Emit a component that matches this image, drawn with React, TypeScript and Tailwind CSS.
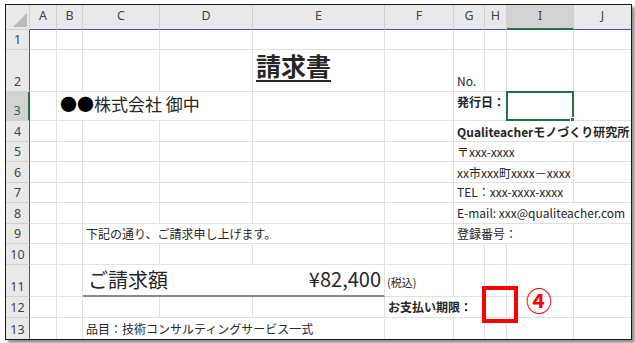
import React from "react";

const LETTERS = ["A", "B", "C", "D", "E", "F", "G", "H", "I", "J"];
const ROWS = [1, 2, 3, 4, 5, 6, 7, 8, 9, 10, 11, 12, 13];

const HIDE_RIGHT: Record<number, number[]> = {
  3: [2, 3, 7],
  4: [7, 8, 9],
  5: [7, 8],
  6: [7, 8],
  7: [7, 8],
  8: [7, 8, 9],
  9: [3, 4, 7, 8],
  12: [6],
  13: [3, 4],
};

const txt = "whitespace-nowrap leading-none text-[#262626]";

function CellContent({ r, c }: { r: number; c: number }) {
  const k = `${r}-${c}`;
  switch (k) {
    case "2-5":
      return (
        <span className={`${txt} pl-[3px] pb-[13px] text-[25px] font-bold text-[#111] underline decoration-2 underline-offset-[4px]`}>
          請求書
        </span>
      );
    case "2-7":
      return <span className={`${txt} pl-[3px] pb-[4px] text-[12px]`}>No.</span>;
    case "3-2":
      return (
        <span className={`${txt} pl-[3px] pb-[8px] text-[17px]`}>
          <span className="text-black">●●</span>株式会社 御中
        </span>
      );
    case "3-7":
      return <span className={`${txt} pl-[3px] pb-[12px] text-[12px] font-bold text-[#111]`}>発行日：</span>;
    case "4-7":
      return <span className={`${txt} pl-[3px] pb-[3px] text-[12px] font-bold text-[#111]`}>Qualiteacherモノづくり研究所</span>;
    case "5-7":
      return <span className={`${txt} pl-[3px] pb-[3px] text-[12px]`}>〒xxx-xxxx</span>;
    case "6-7":
      return <span className={`${txt} pl-[3px] pb-[3px] text-[12px]`}>xx市xxx町xxxx－xxxx</span>;
    case "7-7":
      return <span className={`${txt} pl-[3px] pb-[4px] text-[12px]`}>TEL：xxx-xxxx-xxxx</span>;
    case "8-7":
      return <span className={`${txt} pl-[3px] pb-[4px] text-[12px]`}>E-mail: xxx@qualiteacher.com</span>;
    case "9-3":
      return <span className={`${txt} pl-[3px] pb-[3px] text-[12px]`}>下記の通り、ご請求申し上げます。</span>;
    case "9-7":
      return <span className={`${txt} pl-[3px] pb-[3px] text-[12px] text-[#444]`}>登録番号：</span>;
    case "11-6":
      return <span className={`${txt} pl-[2px] pb-[8px] text-[11px]`}>(税込)</span>;
    case "12-6":
      return <span className={`${txt} pl-[3px] pb-[4px] text-[12px] font-bold text-[#111]`}>お支払い期限：</span>;
    case "13-3":
      return <span className={`${txt} pl-[3px] pb-[4px] text-[12px]`}>品目：技術コンサルティングサービス一式</span>;
    default:
      return null;
  }
}

function DataCell({ r, c }: { r: number; c: number }) {
  const hide = (HIDE_RIGHT[r] || []).includes(c) || c === 10;
  const last = r === 13;
  const cls = [
    "relative flex items-end overflow-visible border-[#e1e1e1]",
    hide ? "" : "border-r",
    last ? "" : "border-b",
  ].join(" ");
  return (
    <div className={cls}>
      <CellContent r={r} c={c} />
      {r === 3 && c === 9 && (
        <div className="pointer-events-none absolute -left-[1px] -top-[1px] -right-[1px] -bottom-[1px] z-10 border-2 border-[#217346]">
          <div className="absolute -bottom-[3px] -right-[3px] h-[5px] w-[5px] border border-white bg-[#217346]" />
        </div>
      )}
      {r === 12 && c === 8 && (
        <div className="pointer-events-none absolute left-[-3px] top-[-11px] z-20 h-[37px] w-[36px] border-[4px] border-[#ff0000]" />
      )}
      {r === 12 && c === 9 && (
        <span className="pointer-events-none absolute left-[19px] top-[-10px] z-20 whitespace-nowrap text-[26px] font-bold leading-none text-[#ff0000]">
          ④
        </span>
      )}
    </div>
  );
}

export default function App() {
  return (
    <div className="h-[343px] w-[635px] bg-white pl-[5px] pt-[4px] font-['Noto_Sans_CJK_JP',sans-serif]">
      <div className="h-[336px] w-[627px] overflow-hidden border border-[#1a1a1a] bg-white shadow-[3px_3px_3px_rgba(0,0,0,0.45)]">
        <div className="grid grid-cols-[24px_27px_26px_77px_93px_132px_69px_31px_22px_67px_57px] grid-rows-[25px_20px_42px_29px_21px_20px_21px_20px_21px_20px_21px_32px_21px_21px]">
          {/* corner */}
          <div className="relative border-b border-r border-[#cfcfcf] bg-[#e9e9e9]">
            <svg className="absolute left-0 top-0" width="23" height="24" viewBox="0 0 23 24">
              <polygon points="21,8 21,22 7,22" fill="#b9b9b9" />
            </svg>
          </div>
          {LETTERS.map((l, i) => {
            const isI = l === "I";
            const isJ = l === "J";
            const cls = [
              "flex items-center justify-center font-['Noto_Sans',sans-serif] text-[12.5px] leading-none text-[#444]",
              isI ? "bg-[#d3d3d3] border-b-2 border-b-[#217346]" : "bg-[#e9e9e9] border-b border-b-[#4b4bc8]",
              isJ ? "" : "border-r border-r-[#d0d0d0]",
            ].join(" ");
            return (
              <div key={l} className={cls}>
                <span className="pb-[1px]">{l}</span>
              </div>
            );
          })}
          {ROWS.map((r) => {
            const sel = r === 3;
            const hdr = [
              "flex items-end justify-center font-['Noto_Sans',sans-serif] text-[12.5px] leading-none",
              sel ? "bg-[#d3d3d3] text-[#217346] border-r-2 border-r-[#217346]" : "bg-[#e9e9e9] text-[#444] border-r border-r-[#4b4bc8]",
              r === 13 ? "" : "border-b border-b-[#d0d0d0]",
            ].join(" ");
            const cells: React.ReactNode[] = [];
            for (let c = 1; c <= 10; c++) {
              if (r === 11 && c === 3) {
                cells.push(
                  <div
                    key={`${r}-${c}`}
                    className="col-span-3 flex items-end justify-between border-b-2 border-r border-b-[#8a8a8a] border-r-[#e1e1e1]"
                  >
                    <span className={`${txt} pb-[5px] pl-[5px] text-[20px]`}>ご請求額</span>
                    <span className={`${txt} pb-[6px] pr-[3px] text-[20px]`}>¥82,400</span>
                  </div>
                );
                continue;
              }
              if (r === 11 && (c === 4 || c === 5)) continue;
              cells.push(<DataCell key={`${r}-${c}`} r={r} c={c} />);
            }
            return (
              <React.Fragment key={r}>
                <div className={hdr}>
                  <span className="pb-[3px]">{r}</span>
                </div>
                {cells}
              </React.Fragment>
            );
          })}
        </div>
      </div>
    </div>
  );
}
